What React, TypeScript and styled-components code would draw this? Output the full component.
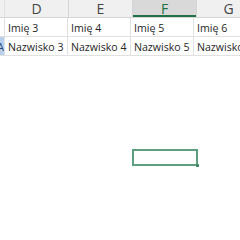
import styled, { createGlobalStyle } from "styled-components";

const GRID = "#e1e1e1";
const GREEN = "#217346";

const GlobalStyle = createGlobalStyle`
  html, body {
    margin: 0;
    padding: 0;
    background: #ffffff;
  }
  body {
    font-family: "Open Sans", "Noto Sans", sans-serif;
  }
`;

const Sheet = styled.div`
  position: relative;
  width: 240px;
  height: 240px;
  overflow: hidden;
  background: #ffffff;
`;

const Row = styled.div<{ $head?: boolean }>`
  display: flex;
  height: ${({ $head }) => ($head ? "17px" : "18px")};
  border-bottom: 1px solid ${({ $head }) => ($head ? "#d4d4d4" : GRID)};
  background: ${({ $head }) => ($head ? "#f0f0f0" : "#ffffff")};
`;

const Stub = styled.div<{ $selected?: boolean }>`
  flex: 0 0 4px;
  border-right: 1px solid ${GRID};
  background: ${({ $selected }) => ($selected ? "#b9d0ec" : "transparent")};
  overflow: hidden;
  display: flex;
  justify-content: flex-end;
  align-items: center;
  font-size: 11px;
  color: #2a4a78;
`;

const HeadCell = styled.div<{ $active?: boolean }>`
  flex: 0 0 63px;
  border-right: 1px solid #d4d4d4;
  display: flex;
  align-items: center;
  justify-content: center;
  font-size: 14px;
  color: ${({ $active }) => ($active ? GREEN : "#444444")};
  background: ${({ $active }) => ($active ? "#d9d9d9" : "transparent")};
  box-shadow: ${({ $active }) => ($active ? `inset 0 -2px 0 ${GREEN}` : "none")};
`;

const Cell = styled.div`
  flex: 0 0 60px;
  padding: 1px 0 0 3px;
  box-sizing: border-box;
  flex-basis: 63px;
  border-right: 1px solid ${GRID};
  display: flex;
  align-items: center;
  font-size: 10.6px;
  color: #262626;
  white-space: nowrap;
  overflow: hidden;
`;

const Selection = styled.div`
  position: absolute;
  left: 132px;
  top: 149px;
  width: 62px;
  height: 13px;
  border: 2px solid #5e9f80;
`;

const Handle = styled.div`
  position: absolute;
  right: -3px;
  bottom: -3px;
  width: 3px;
  height: 3px;
  background: #4a8a6a;
`;

const columns = ["D", "E", "F", "G"];

export default function App() {
  return (
    <>
      <GlobalStyle />
      <Sheet>
        <Row $head>
          <Stub />
          {columns.map((c) => (
            <HeadCell key={c} $active={c === "F"}>
              {c}
            </HeadCell>
          ))}
        </Row>
        <Row>
          <Stub />
          {[3, 4, 5, 6].map((n) => (
            <Cell key={n}>Imię {n}</Cell>
          ))}
        </Row>
        <Row>
          <Stub $selected>A</Stub>
          {[3, 4, 5, 6].map((n) => (
            <Cell key={n}>Nazwisko {n}</Cell>
          ))}
        </Row>
        <Selection>
          <Handle />
        </Selection>
      </Sheet>
    </>
  );
}
